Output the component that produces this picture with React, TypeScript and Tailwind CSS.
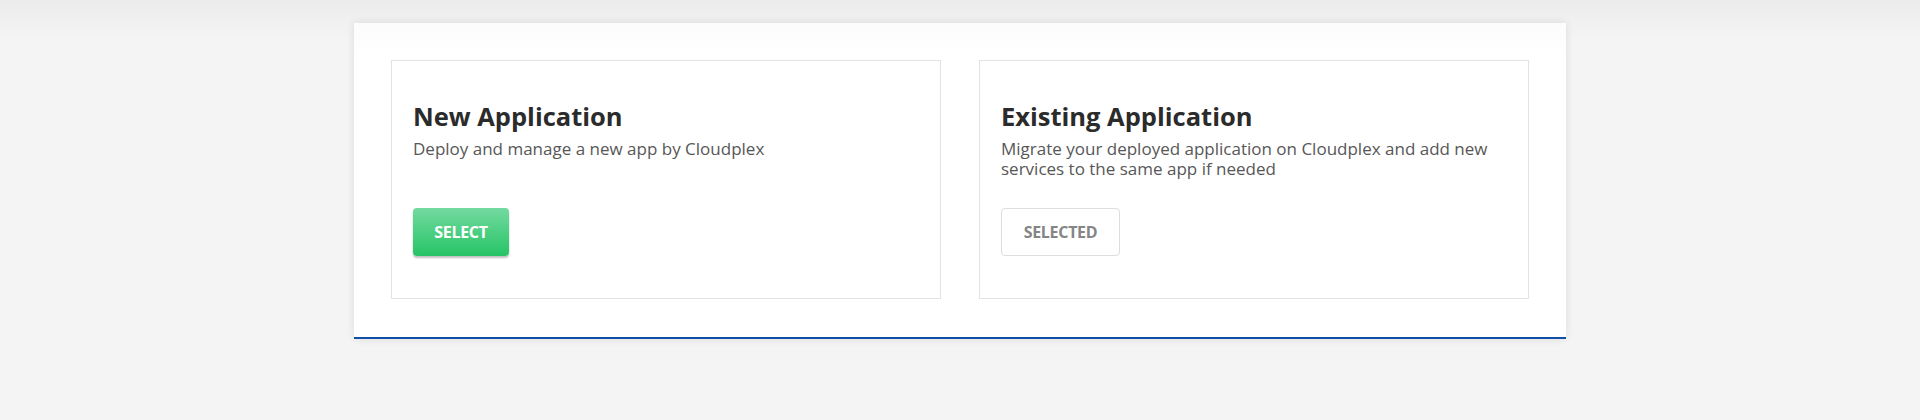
import React from "react";

type Option = {
  title: string;
  description: string;
  selected: boolean;
};

const options: Option[] = [
  {
    title: "New Application",
    description: "Deploy and manage a new app by Cloudplex",
    selected: false,
  },
  {
    title: "Existing Application",
    description:
      "Migrate your deployed application on Cloudplex and add new services to the same app if needed",
    selected: true,
  },
];

function OptionCard({ option }: { option: Option }) {
  return (
    <div className="flex w-[550px] flex-col border border-[#e3e3e3] bg-white px-[21px] pt-[40px] pb-[42px]">
      <h2 className="text-[25.5px] leading-[30px] font-bold text-[#2b2b2b]">
        {option.title}
      </h2>
      <p className="mt-2 min-h-[40px] text-[17px] leading-[20px] text-[#575757]">
        {option.description}
      </p>
      <div className="mt-[29px]">
        {option.selected ? (
          <button className="flex h-12 w-[119px] items-center justify-center rounded-[4px] border border-[#dedede] bg-white text-[16px] font-bold tracking-[-0.3px] text-[#858585]">
            SELECTED
          </button>
        ) : (
          <button className="flex h-12 w-[96px] items-center justify-center rounded-[4px] bg-[linear-gradient(#74daa0,#25c465)] text-[16px] font-bold tracking-[-0.3px] text-white shadow-[0_2px_2px_rgba(0,0,0,0.25)]">
            SELECT
          </button>
        )}
      </div>
    </div>
  );
}

export default function App() {
  return (
    <div
      className="min-h-screen bg-[linear-gradient(#ececec,#f4f4f4_40px)] pt-[23px]"
      style={{ fontFamily: '"Open Sans", "Noto Sans", sans-serif' }}
    >
      <div className="mx-auto flex w-[1212px] justify-between border-b-2 border-[#0f4fa7] bg-[linear-gradient(#fcfcfc,#ffffff_30px)] p-[37px] pb-[38px] shadow-[0_0_8px_rgba(0,0,0,0.1)]">
        {options.map((option) => (
          <OptionCard key={option.title} option={option} />
        ))}
      </div>
    </div>
  );
}
